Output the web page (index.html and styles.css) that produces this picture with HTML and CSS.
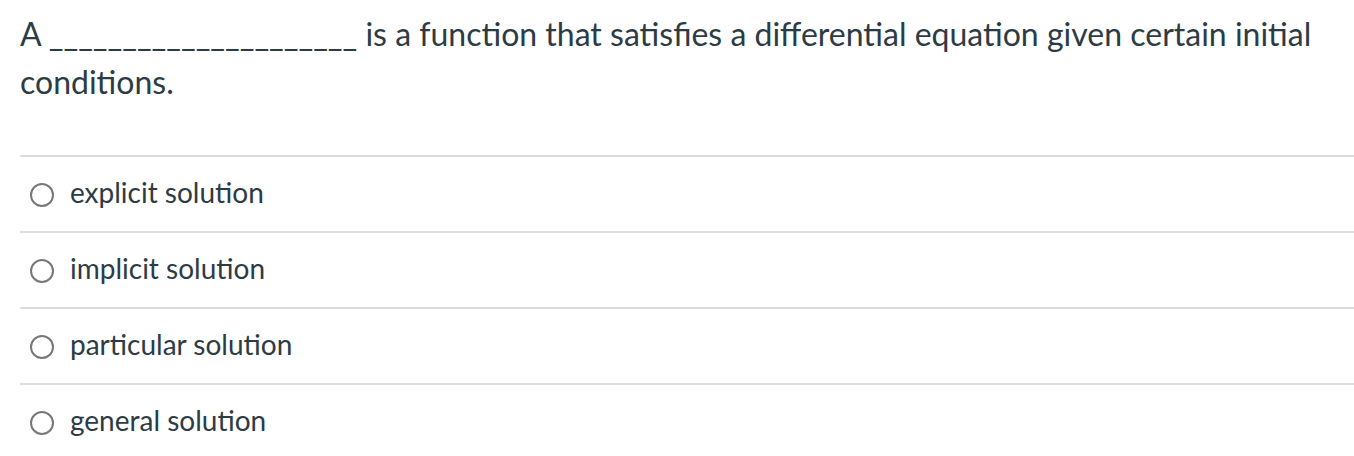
FILE: index.html
```html
<!DOCTYPE html>
<html>
<head>
<meta charset="utf-8">
<link rel="stylesheet" href="styles.css">
</head>
<body>
<div class="question">
  <div class="text">A _____________________ is a function that satisfies a differential equation given certain initial conditions.</div>
  <div class="answers">
    <div class="answer"><span class="radio"></span><span class="label">explicit solution</span></div>
    <div class="answer"><span class="radio"></span><span class="label">implicit solution</span></div>
    <div class="answer"><span class="radio"></span><span class="label">particular solution</span></div>
    <div class="answer"><span class="radio"></span><span class="label">general solution</span></div>
  </div>
</div>
</body>
</html>
```
FILE: styles.css
```css
html, body {
  margin: 0;
  padding: 0;
  background: #ffffff;
}
body {
  font-family: Lato, "Open Sans", sans-serif;
  color: #2d3b45;
}
.question {
  padding: 10px 0 0 20px;
}
.text {
  font-size: 32px;
  line-height: 48px;
  padding-right: 30px;
}
.answers {
  margin-top: 49px;
  border-top: 2px solid #dddddd;
}
.answer {
  display: flex;
  align-items: center;
  gap: 16px;
  height: 74px;
  border-bottom: 2px solid #dddddd;
  padding-left: 10px;
  font-size: 28px;
}
.answer:last-child {
  border-bottom: none;
}
.label {
  margin-bottom: 5px;
}
.radio {
  width: 20px;
  height: 20px;
  border: 2px solid #777777;
  border-radius: 50%;
  flex: none;
  margin-top: 2px;
}
```
